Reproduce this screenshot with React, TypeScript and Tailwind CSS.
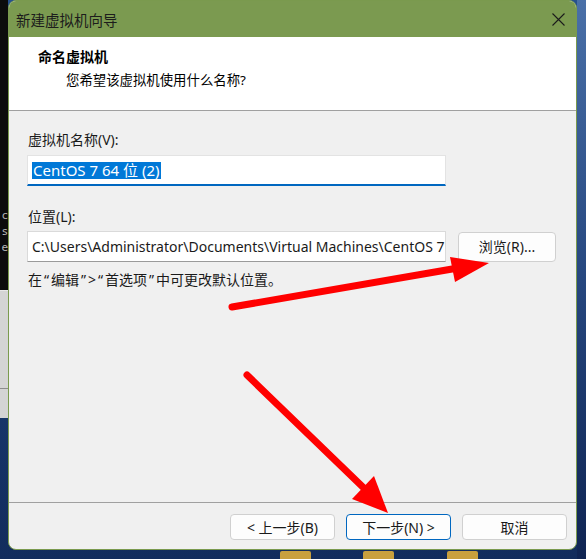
const ui = "font-['Noto_Sans','Noto_Sans_CJK_SC',sans-serif]";

const LeftStrip = () => {
  return (
    <div className="flex w-[8px] shrink-0 flex-col">
      {/* terminal window behind the dialog */}
      <div className="flex h-[290px] flex-col items-end overflow-hidden bg-[#0c0c0c] pt-[208px] font-['DejaVu_Sans_Mono',monospace] text-[11px] leading-[16px] text-[#b8b8b8]">
        <span>c</span>
        <span>s</span>
        <span>e</span>
      </div>
      <div className="flex h-[128px] flex-col border-t border-[#e8e8e8] bg-[#d4d4d4]">
        <div className="h-[97px]" />
        <div className="h-px bg-[#8c8c8c]" />
      </div>
    </div>
  );
};

const CloseIcon = () => (
  <svg width="13" height="13" viewBox="0 0 13 13" fill="none">
    <path d="M0.5 0.5 L12.5 12.5 M12.5 0.5 L0.5 12.5" stroke="#1b1b1b" strokeWidth="1.1" />
  </svg>
);

const Q = ({ c }: { c: string }) => <span className="inline-block w-[9px] text-center">{c}</span>;

const Button = ({ label, primary }: { label: string; primary?: boolean }) => (
  <button
    className={
      "flex h-[26px] w-[105px] items-center justify-center rounded-[4px] border bg-[#fdfdfd] text-[14px] text-[#1a1a1a] " +
      (primary ? "border-[#0067c0]" : "border-[#d0d0d0]")
    }
  >
    {label}
  </button>
);

const Dialog = () => {
  return (
    <div className={`flex h-[550px] flex-col overflow-hidden rounded-[8px] border border-[#7a9a4e] bg-[#f0f0f0] ${ui}`}>
      {/* title bar */}
      <div className="flex h-[36px] shrink-0 items-center justify-between bg-[#7b9a50] pl-[7px] pr-[11px]">
        <span className="pt-[3px] text-[14.5px] text-[#1c1c1c]">新建虚拟机向导</span>
        <CloseIcon />
      </div>

      {/* header */}
      <div className="flex h-[74px] shrink-0 flex-col border-b border-[#a0a0a0] bg-white pl-[29px] pt-[10px]">
        <span className="text-[14px] font-bold leading-[20px] text-black">命名虚拟机</span>
        <span className="mt-[3px] pl-[28px] text-[13.4px] leading-[20px] text-black">您希望该虚拟机使用什么名称?</span>
      </div>

      {/* body */}
      <div className="flex flex-1 flex-col pl-[18px] pt-[19px]">
        <span className="pl-[1px] text-[14px] leading-[20px] text-[#1a1a1a]">虚拟机名称(V):</span>
        <div className="mt-[5px] flex h-[31px] w-[419px] items-center border border-b-2 border-[#e3e3e3] border-b-[#0067c0] bg-white pl-[4px]">
          <span className="bg-[#0078d7] px-px text-[15px] leading-[17px] text-white">CentOS 7 64 位 (2)</span>
        </div>

        <span className="mt-[21px] pl-[1px] text-[14px] leading-[20px] text-[#1a1a1a]">位置(L):</span>
        <div className="mt-[4px] flex items-center gap-[12px]">
          <div className="flex h-[31px] w-[419px] items-center border border-[#dadada] border-b-[#9a9a9a] bg-white pl-[4px] pr-[2px]">
            <span className="whitespace-nowrap text-[14px] text-[#1a1a1a]">
              C:\Users\Administrator\Documents\Virtual Machines\CentOS 7
            </span>
          </div>
          <button className="flex h-[30px] w-[98px] items-center justify-center rounded-[4px] border border-[#d0d0d0] bg-[#fdfdfd] text-[14px] text-[#1a1a1a]">
            浏览(R)...
          </button>
        </div>

        <span className="mt-[8px] pl-[1px] text-[14px] leading-[20px] text-[#1a1a1a]">
          在<Q c="“" />编辑<Q c="”" />&gt;<Q c="“" />首选项<Q c="”" />中可更改默认位置。
        </span>
      </div>

      {/* footer */}
      <div className="flex h-[47px] shrink-0 justify-end gap-[11px] border-t border-[#a0a0a0] pr-[9px] pt-[11px]">
        <Button label="< 上一步(B)" />
        <Button label="下一步(N) >" primary />
        <Button label="取消" />
      </div>
    </div>
  );
};

const Arrows = () => (
  <svg className="pointer-events-none absolute left-0 top-0" width="586" height="559" viewBox="0 0 586 559">
    <line x1="232" y1="307" x2="458" y2="268" stroke="#ff0000" strokeWidth="7" strokeLinecap="round" />
    <polygon points="450,257 489,263 455,282" fill="#ff0000" />
    <line x1="247" y1="375" x2="368" y2="492" stroke="#ff0000" strokeWidth="7" strokeLinecap="round" />
    <polygon points="352,499 388,513 374,476" fill="#ff0000" />
  </svg>
);

export default function App() {
  return (
    <div className="relative flex h-[559px] w-[586px] overflow-hidden bg-gradient-to-b from-[#27518c] via-[#1c3f75] to-[#122c5c]">
      <LeftStrip />
      <div className="flex w-[569px] shrink-0 flex-col">
        <Dialog />
        <div className="flex h-[9px] items-end pl-[272px]">
          <div className="h-[8px] w-[31px] rounded-t-[2px] bg-[#c9a03e]" />
          <div className="ml-[52px] h-[8px] w-[31px] rounded-t-[2px] bg-[#c9a03e]" />
          <div className="ml-[53px] h-[8px] w-[31px] rounded-t-[2px] bg-[#c9a03e]" />
        </div>
      </div>
      <div className="flex-1 bg-gradient-to-b from-[#4a70a8] via-[#26477f] to-[#0f2452]" />
      <Arrows />
    </div>
  );
}
